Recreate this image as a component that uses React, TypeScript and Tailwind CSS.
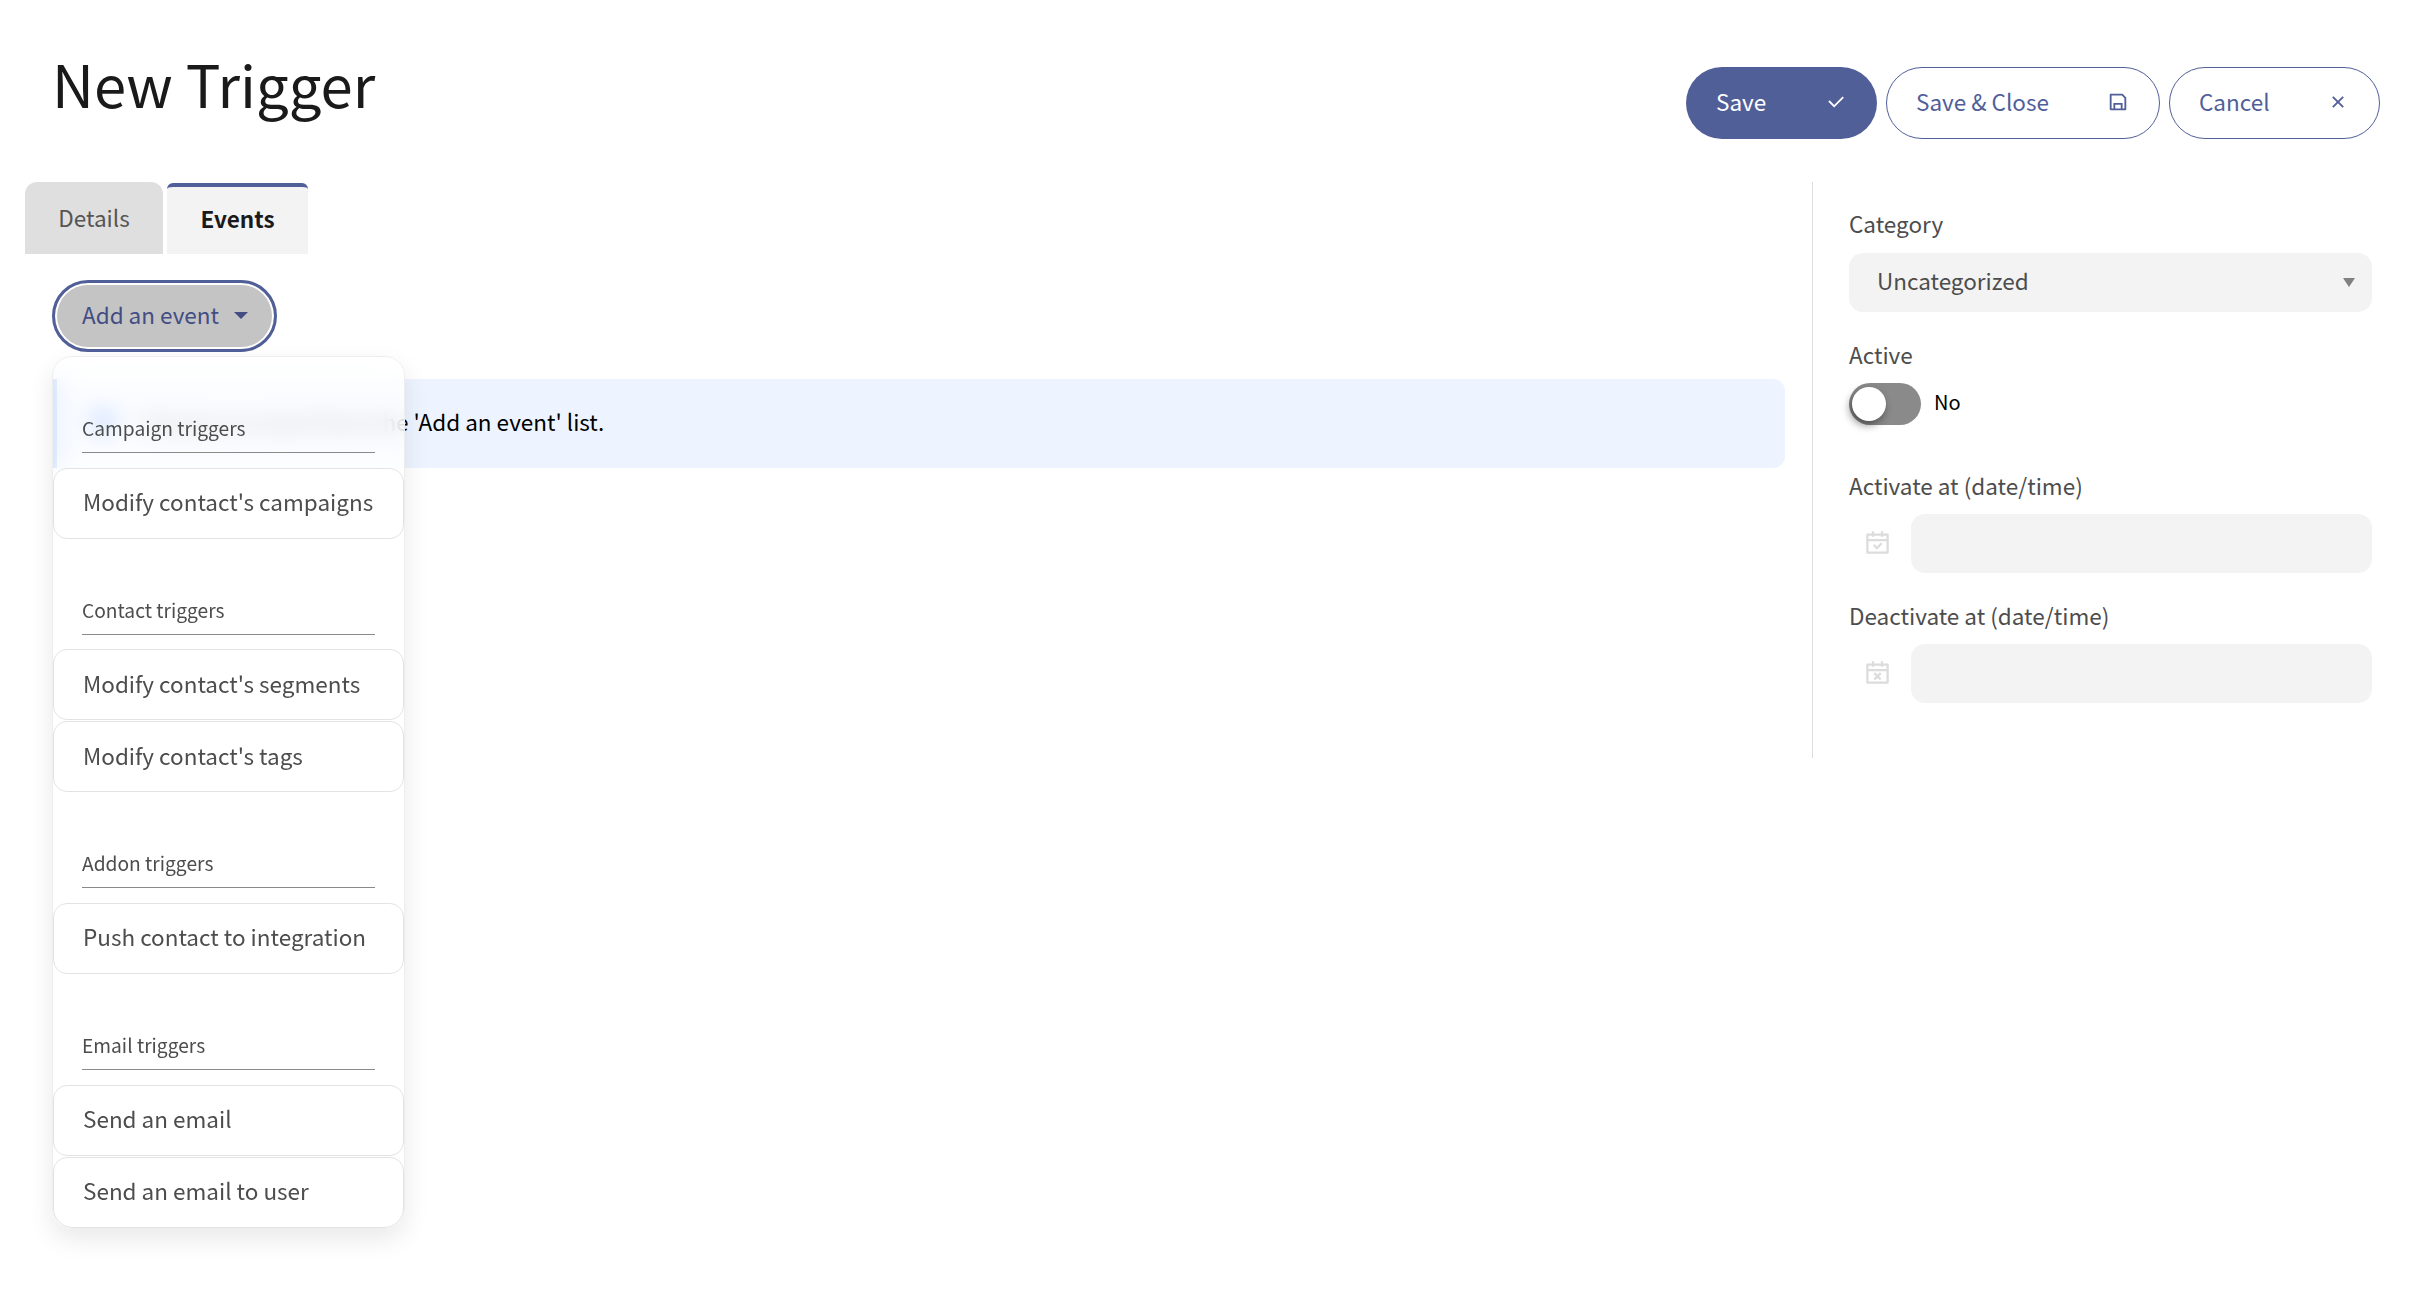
import React from 'react';
import { RiCheckLine, RiSaveLine, RiCloseLine, RiCalendarCheckLine, RiCalendarCloseLine, RiInformationFill } from 'react-icons/ri';

const sections = [
    { title: 'Campaign triggers', items: ["Modify contact's campaigns"] },
    { title: 'Contact triggers', items: ["Modify contact's segments", "Modify contact's tags"] },
    { title: 'Addon triggers', items: ['Push contact to integration'] },
    { title: 'Email triggers', items: ['Send an email', 'Send an email to user'] }
];

const Label = ({ children, className = '' }: { children: React.ReactNode; className?: string }) => (
    <div className={`h-[30px] text-[22.5px] leading-[30px] text-[#4d4d4d] ${className}`}>{children}</div>
);

const DateField = ({ label, icon, className }: { label: string; icon: React.ReactNode; className: string }) => (
    <div className={className}>
        <Label className="mb-[14px]">{label}</Label>
        <div className="flex items-center">
            <div className="flex w-[62px] items-center justify-center pr-[6px] text-[#dcdcdc]">{icon}</div>
            <div className="h-[59px] flex-1 rounded-[14px] bg-[#f3f3f3]" />
        </div>
    </div>
);

const EventDropdown = () => (
    <div className="absolute left-0 top-[76px] z-10 w-[353px] rounded-[20px] border border-[#eeeeee] bg-white/75 shadow-[0_10px_26px_rgba(0,0,0,0.09)] backdrop-blur-[12px]">
        {sections.map(section => (
            <div key={section.title}>
                <div className="mx-[29px] flex h-[96px] items-end border-b border-[#8a8a8a] pb-[9px] text-[19.2px] leading-[30px] text-[#4d4d4d]">
                    {section.title}
                </div>
                <div className="mt-[14.7px] flex flex-col gap-[1px]">
                    {section.items.map(item => (
                        <div
                            key={item}
                            className={`flex h-[71px] items-center border border-[#e3e3e3] bg-white pb-[3px] pl-[29px] text-[22.5px] text-[#4d4d4d] ${item === 'Send an email to user' ? 'rounded-t-[14px] rounded-b-[20px]' : 'rounded-[14px]'}`}
                        >
                            {item}
                        </div>
                    ))}
                </div>
            </div>
        ))}
    </div>
);

export default function App() {
    return (
        <div className="min-h-screen bg-white font-['Noto_Sans_CJK_SC',sans-serif]">
            <div className="flex h-[182px] items-start justify-between pl-[52px] pr-[54px]">
                <h1 className="mt-[45px] text-[58px] leading-[76px] text-[#1a1a1a]">New Trigger</h1>
                <div className="mt-[67px] flex gap-[9px] text-[22.5px]">
                    <button className="flex h-[72px] w-[191px] items-center justify-between rounded-[36px] bg-[#515f99] pb-[2px] pl-[30px] pr-[30px] text-white">
                        Save
                        <RiCheckLine size={22} />
                    </button>
                    <button className="flex h-[72px] w-[274px] items-center justify-between rounded-[36px] border border-[#515f99] pb-[2px] pl-[29px] pr-[30px] text-[#515f99]">
                        Save &amp; Close
                        <RiSaveLine size={22} />
                    </button>
                    <button className="flex h-[72px] w-[211px] items-center justify-between rounded-[36px] border border-[#515f99] pb-[2px] pl-[29px] pr-[30px] text-[#515f99]">
                        Cancel
                        <RiCloseLine size={22} />
                    </button>
                </div>
            </div>
            <div className="flex items-start">
                <div className="min-w-0 flex-1 pl-[25px] pr-[27px]">
                    <div className="flex h-[72px] items-end gap-[4px] text-[22.5px]">
                        <div className="flex h-[72px] w-[138px] items-center justify-center rounded-t-[12px] bg-[#dfdfdf] text-[#555555]">Details</div>
                        <div className="flex h-[71px] w-[141px] items-center justify-center rounded-t-[6px] border-t-4 border-[#515f99] bg-[#f3f3f3] pb-[3px] font-bold text-[#1a1a1a]">Events</div>
                    </div>
                    <div className="relative ml-[27px] mt-[26px] w-fit">
                        <button className="flex h-[72px] w-[225px] items-center rounded-[36px] border-[3px] border-[#515f99] bg-[#c4c4c4] pb-[2px] pl-[27px] text-[22.5px] text-[#434d84] shadow-[inset_0_0_0_2px_#ffffff]">
                            Add an event
                            <span className="ml-[15px] h-0 w-0 border-x-[7px] border-t-[7px] border-x-transparent border-t-[#434d84]" />
                        </button>
                        <EventDropdown />
                    </div>
                    <div className="ml-[27px] mt-[27px] flex h-[89px] items-center rounded-r-[12px] border-l-[5px] border-[#0f62fe] bg-[#edf4ff] pb-[4px] pl-[32px] text-[22.5px] text-black">
                        <RiInformationFill size={28} className="text-[#0f62fe]" />
                        <span className="ml-[23px]">Choose an event from the 'Add an event' list.</span>
                    </div>
                </div>
                <div className="h-[576px] w-[622px] shrink-0 border-l border-[#dddddd] pl-[36px] pr-[62px] pt-[26px]">
                    <Label className="mb-[15px]">Category</Label>
                    <div className="flex h-[59px] items-center justify-between rounded-[14px] bg-[#f3f3f3] pb-[4px] pl-[28px] pr-[17px] text-[22.5px] text-[#4d4d4d]">
                        Uncategorized
                        <span className="mt-[4px] h-0 w-0 border-x-[6px] border-t-[9px] border-x-transparent border-t-[#808080]" />
                    </div>
                    <Label className="mb-[14px] mt-[27px]">Active</Label>
                    <div className="flex items-center">
                        <div className="flex h-[42px] w-[72px] items-center rounded-full bg-[#8a8a8a] pl-[3px]">
                            <div className="h-[34px] w-[34px] rounded-full bg-white shadow-[-2px_4px_8px_rgba(0,0,0,0.45)]" />
                        </div>
                        <span className="ml-[13px] pb-[4px] text-[20px] text-black">No</span>
                    </div>
                    <DateField className="mt-[45px]" label="Activate at (date/time)" icon={<RiCalendarCheckLine size={27} />} />
                    <DateField className="mt-[27px]" label="Deactivate at (date/time)" icon={<RiCalendarCloseLine size={27} />} />
                </div>
            </div>
        </div>
    );
}
